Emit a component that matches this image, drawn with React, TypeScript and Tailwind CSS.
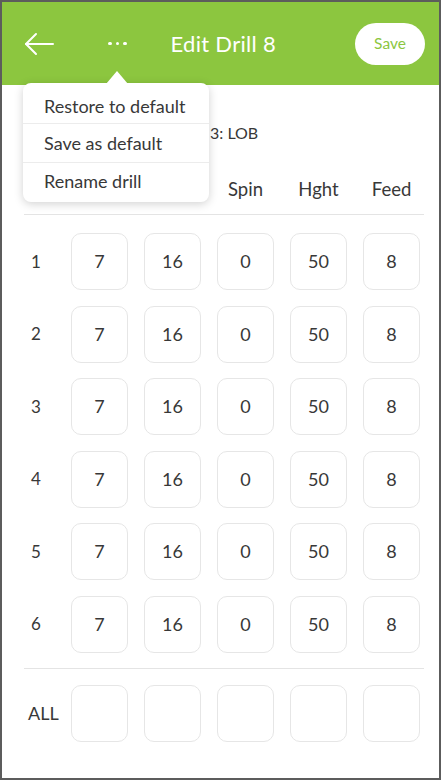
import React from "react";

const rows = [1, 2, 3, 4, 5, 6];
const vals = ["7", "16", "0", "50", "8"];

function Box({ v }: { v?: string }) {
  return (
    <div className="w-[57px] h-[57px] rounded-[10px] border border-[#e6e6e6] flex items-center justify-center text-[18px] text-[#383838]">
      {v}
    </div>
  );
}

export default function App() {
  return (
    <div
      className="relative w-[441px] h-[780px] border-2 border-[#5c5c5c] bg-white overflow-hidden"
      style={{ fontFamily: "Lato, 'Open Sans', sans-serif" }}
    >
      {/* Header */}
      <div className="h-[83px] bg-[#8cc63f] flex items-center pl-[22px] pr-[14px]">
        <svg width="30" height="24" viewBox="0 0 30 24" fill="none" stroke="white" strokeWidth="2" strokeLinecap="round" strokeLinejoin="round">
          <path d="M29 12H2" />
          <path d="M12 2L2 12l10 10" />
        </svg>
        <div className="ml-[54px] flex gap-[4px] items-center">
          <span className="w-[3.5px] h-[3.5px] rounded-full bg-white" />
          <span className="w-[3.5px] h-[3.5px] rounded-full bg-white" />
          <span className="w-[3.5px] h-[3.5px] rounded-full bg-white" />
        </div>
        <div className="ml-[44px] text-white text-[22px] tracking-[0.3px]">Edit Drill 8</div>
        <div className="ml-auto w-[70px] h-[42px] rounded-full bg-white flex items-center justify-center text-[15.5px] text-[#8cc63f]">
          Save
        </div>
      </div>

      {/* Body */}
      <div className="pl-[22px] pr-[15px]">
        <div className="pt-[38px] h-[58px] pl-[186px] text-[16px] leading-[20px] text-[#383838] whitespace-nowrap">
          3: LOB
        </div>
        <div className="mt-[37px] h-[20px] flex items-center text-[18.5px] text-[#383838]">
          <div className="w-[47px]" />
          <div className="flex gap-[16px]">
            <div className="w-[57px]" />
            <div className="w-[57px]" />
            <div className="w-[57px] text-center">Spin</div>
            <div className="w-[57px] text-center">Hght</div>
            <div className="w-[57px] text-center">Feed</div>
          </div>
        </div>
        <div className="mt-[14px] h-px bg-[#e4e4e4]" />
        <div className="mt-[18px] flex flex-col gap-[15.5px]">
          {rows.map((r) => (
            <div key={r} className="flex items-center">
              <div className="w-[47px] pl-[7px] text-[17px] text-[#383838]">{r}</div>
              <div className="flex gap-[16px]">
                {vals.map((v, i) => (
                  <Box key={i} v={v} />
                ))}
              </div>
            </div>
          ))}
        </div>
        <div className="mt-[15.5px] h-px bg-[#e4e4e4]" />
        <div className="mt-[15.5px] flex items-center">
          <div className="w-[47px] pl-[4px] text-[18px] text-[#383838]">ALL</div>
          <div className="flex gap-[16px]">
            {vals.map((_, i) => (
              <Box key={i} />
            ))}
          </div>
        </div>
      </div>

      {/* Menu */}
      <div className="absolute left-[21px] top-[81px] w-[186px] rounded-[8px] bg-white shadow-[0_2px_10px_rgba(0,0,0,0.18)] text-[18px] text-[#383838]">
        <div className="absolute -top-[12px] left-[83px] w-0 h-0 border-l-[11px] border-r-[11px] border-b-[13px] border-l-transparent border-r-transparent border-b-white" />
        <div className="h-[41px] flex items-center pl-[21px] pt-[6px] border-b border-[#ececec]">Restore to default</div>
        <div className="h-[39px] flex items-center pl-[21px] border-b border-[#ececec]">Save as default</div>
        <div className="h-[39px] flex items-center pl-[21px] pb-[3px]">Rename drill</div>
      </div>
    </div>
  );
}
